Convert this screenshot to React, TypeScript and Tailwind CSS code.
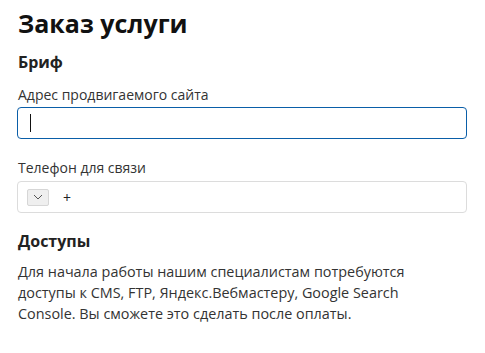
export default function App() {
  return (
    <div className="min-h-screen bg-white px-[18px] pt-[6px] text-[#111] font-['Open_Sans',sans-serif]">
      <h1 className="text-[25px] font-bold leading-[34px] text-[#111]">Заказ услуги</h1>

      <h2 className="mt-[11px] text-[16px] font-bold leading-[22px] text-[#222]">Бриф</h2>

      <label className="mt-[12px] block text-[14px] leading-[20px] text-[#333]">Адрес продвигаемого сайта</label>
      <div className="mt-[2px] -ml-px flex h-[32px] w-[450px] items-center rounded-[4px] border border-[#0a5ea8] px-3">
        <span className="block h-[18px] w-px bg-[#111]" />
      </div>

      <label className="mt-[19px] block text-[14px] leading-[20px] text-[#333]">Телефон для связи</label>
      <div className="mt-[3px] -ml-px flex h-[32px] w-[450px] items-center rounded-[4px] border border-[#dcdcdc] px-[9px]">
        <div className="flex h-[17px] w-[22px] items-center justify-center rounded-[2px] border border-[#d6d6d6] bg-[#efefef]">
          <svg width="10" height="6" viewBox="0 0 10 6" fill="none" stroke="#555" strokeWidth="1">
            <path d="M1 1l4 4 4-4" />
          </svg>
        </div>
        <span className="ml-[14px] text-[14px] text-[#222]">+</span>
      </div>

      <h2 className="mt-[17px] text-[16px] font-bold leading-[22px] text-[#222]">Доступы</h2>

      <p className="mt-[9px] text-[14.4px] leading-[21px] text-[#333]">
        Для начала работы нашим специалистам потребуются
        <br />
        доступы к CMS, FTP, Яндекс.Вебмастеру, Google Search
        <br />
        Console. Вы сможете это сделать после оплаты.
      </p>
    </div>
  );
}
